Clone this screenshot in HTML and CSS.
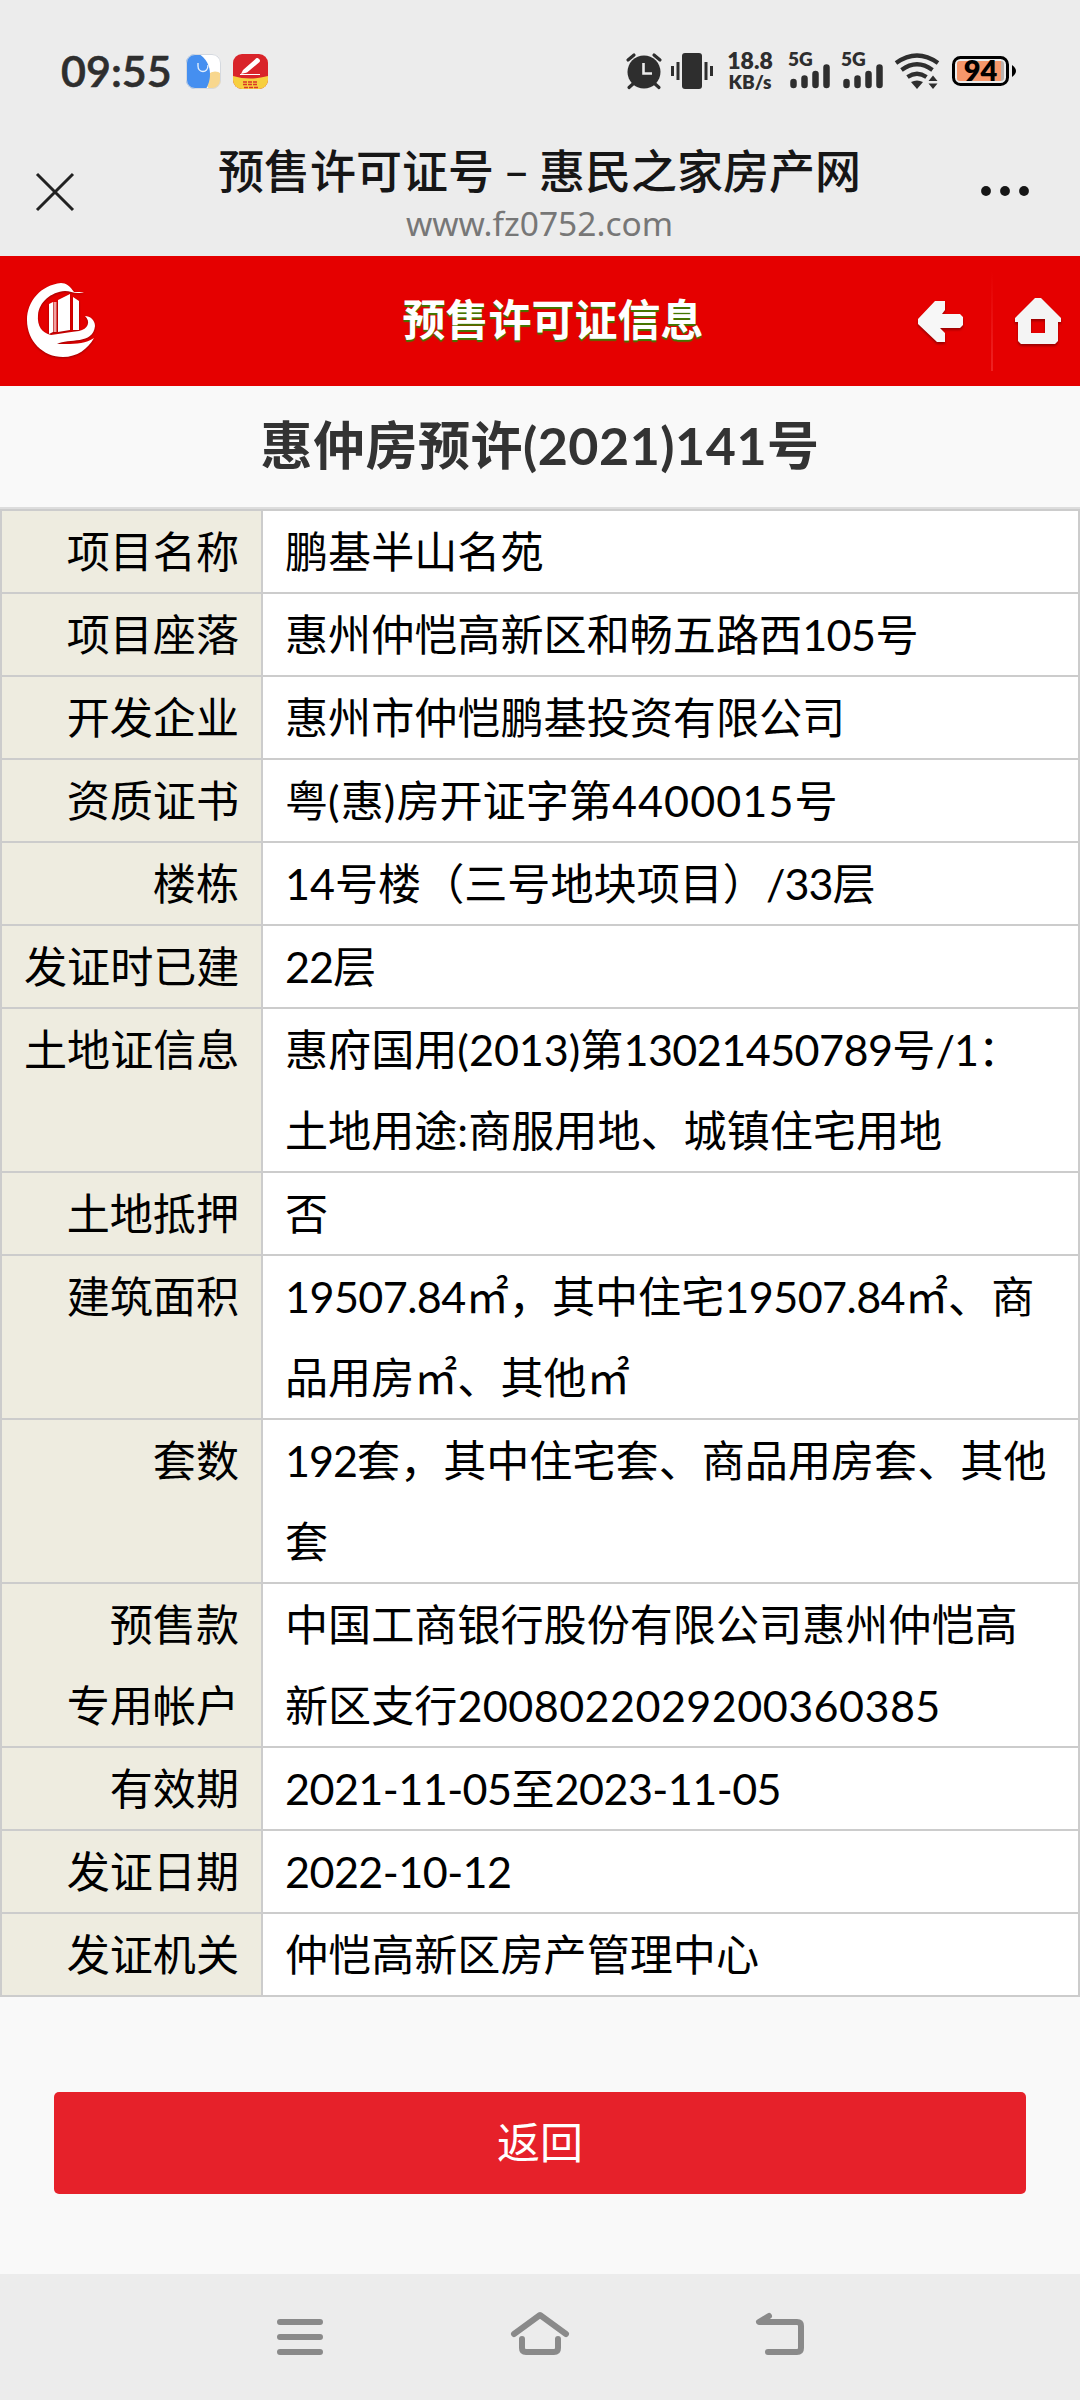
FILE: index.html
```html
<!DOCTYPE html>
<html lang="zh-CN">
<head>
    <meta charset="UTF-8">
    <meta name="viewport" content="width=device-width, initial-scale=1.0">
    <title>预售许可证号 – 惠民之家房产网</title>
    <link rel="stylesheet" href="styles.css">
</head>
<body>
    <!-- Status Bar -->
    <div class="status-bar">
        <span class="clock">09:55</span>
        <svg class="app-icon" width="35" height="35" viewBox="0 0 35 35">
            <clipPath id="round"><rect width="35" height="35" rx="9"/></clipPath>
            <g clip-path="url(#round)">
                <rect width="35" height="35" fill="#fff"/>
                <circle cx="29" cy="27" r="9.5" fill="#f8d78e"/>
                <path d="M0 0H13C20 4 24 12 24 20C24 27 22 31 20 35H0Z" fill="#458ff0"/>
                <path d="M12 9V12C12 19 22 20 22 11" fill="none" stroke="#e3effd" stroke-width="1.4"/>
            </g>
            <rect x=".5" y=".5" width="34" height="34" rx="8.5" fill="none" stroke="#d5d9df"/>
        </svg>
        <svg class="app-icon" width="35" height="35" viewBox="0 0 35 35">
            <g clip-path="url(#round)">
                <rect width="35" height="35" fill="#d9242a"/>
                <path d="M0 22Q17 27 35 22V35H0Z" fill="#f7cf3f"/>
                <path d="M8 20L10 16L22 5.500Q24 3 26 5Q28 6.500 26 8.500L14 18.500Z" fill="#fff"/>
                <path d="M7 20.500H27" stroke="#fff" stroke-width="1"/>
                <path d="M10 28H24M10 30.500H25M11 33.500H26" stroke="#d9372a" stroke-width="1.600" stroke-dasharray="4 1"/>
            </g>
        </svg>

        <div class="status-right">
            <svg class="alarm" width="36" height="36" viewBox="0 0 36 36">
                <circle cx="18" cy="19" r="16.500" fill="#2e2e2e"/>
                <path d="M2 7L8 2M34 7L28 2M3 34.500L8 30M33 34.500L28 30" stroke="#2e2e2e" stroke-width="3.200" stroke-linecap="round"/>
                <path d="M17.500 10V20.500H26" fill="none" stroke="#ececec" stroke-width="2.600"/>
            </svg>
            <svg class="vibrate" width="42" height="36" viewBox="0 0 42 36">
                <rect x="11" y="0" width="20" height="36" rx="3" fill="#2e2e2e"/>
                <path d="M1.500 13V23M7 9V27M35 9V27M40.500 13V23" stroke="#2e2e2e" stroke-width="3"/>
            </svg>
            <div class="speed">
                <span>18.8</span>
                <small>KB/s</small>
            </div>
            <svg class="signal" width="43" height="38" viewBox="0 0 43 38">
                <text x="0" y="14" class="net">5G</text>
                <path d="M5.500 30V33M16.500 26.500V33M27.500 22V33M38.500 15.500V33" stroke="#2e2e2e" stroke-width="6.500" stroke-linecap="round"/>
            </svg>
            <svg class="signal" width="43" height="38" viewBox="0 0 43 38">
                <text x="0" y="14" class="net">5G</text>
                <path d="M5.500 30V33M16.500 26.500V33M27.500 22V33M38.500 15.500V33" stroke="#2e2e2e" stroke-width="6.500" stroke-linecap="round"/>
            </svg>
            <svg class="wifi" width="45" height="37" viewBox="0 0 45 37">
                <g fill="none" stroke="#2e2e2e" stroke-width="4.200">
                    <path d="M1 10Q22 -5 43 10"/>
                    <path d="M6.500 17Q22 5.500 37.500 17"/>
                    <path d="M12.500 24Q22 17.500 31.500 24"/>
                </g>
                <path d="M16 29Q22 26 28 29L22 36Z" fill="#2e2e2e"/>
                <path d="M33.500 28L38 22.500L42.500 28ZM33.500 30.500H42.500L38 36Z" fill="#2e2e2e"/>
            </svg>
            <svg class="battery" width="64" height="30" viewBox="0 0 64 30">
                <rect x="1.500" y="1.500" width="54" height="27" rx="7" fill="#ececec" stroke="#000" stroke-width="3"/>
                <rect x="5" y="5" width="47" height="20" rx="3" fill="#b9b2ae"/>
                <path d="M8 5H49V25H8Q5 25 5 22V8Q5 5 8 5Z" fill="#f6976b"/>
                <path d="M60 9Q64 12 64 15Q64 18 60 21Z" fill="#000"/>
                <text x="28.500" y="25" class="level">94</text>
            </svg>
        </div>
    </div>

    <!-- Browser Title -->
    <div class="browser-bar">
        <svg class="close" width="38" height="38" viewBox="0 0 38 38">
            <path d="M1 1L37 37M37 1L1 37" stroke="#222" stroke-width="3"/>
        </svg>
        <div class="browser-title">
            <h1>预售许可证号 – 惠民之家房产网</h1>
            <p>www.fz0752.com</p>
        </div>
        <svg class="more" width="48" height="10" viewBox="0 0 48 10">
            <g fill="#161616">
                <circle cx="5" cy="5" r="4.900"/>
                <circle cx="24" cy="5" r="4.900"/>
                <circle cx="43" cy="5" r="4.900"/>
            </g>
        </svg>
    </div>

    <!-- Site Header -->
    <header class="site-header">
        <svg class="logo" width="70" height="76" viewBox="0 0 70 76">
            <path d="M57 10L47 10C43 4 39 1 34 1C14 3 0 19 0 38C0 59 16 75 36 75C50 75 61 67 67 56C57 63 44 62 30 62C42 56 66 63 68 44C68 38 63 34 58 34C64 40 61 47 52 49C41 50 34 52 24 53C15 51 10 44 11 33C12 20 24 10 38 9C44 9 49 13 57 10Z" fill="#fff"/>
            <path d="M22 22L26 20V50L22 52ZM31 18L43 12V48L31 50ZM46 15L52 19V48H46Z" fill="#fff"/>
            <path d="M28 20V50" stroke="#f3a0a0" stroke-width="3"/>
        </svg>
        <h2>预售许可证信息</h2>
        <div class="header-links">
            <svg class="back" width="47" height="43" viewBox="0 0 47 43">
                <path d="M18 1H28V10L25 14H43L46 17V25L43 28H23L28 33V42H20L1 24V19Z" fill="#f7f7f7"/>
            </svg>
            <span class="divider"></span>
            <svg class="home" width="46" height="48" viewBox="0 0 46 48">
                <path fill-rule="evenodd" d="M20 1H26L46 21V25H43V44L40 47H6L3 44V25H0V21ZM16 22V36H30V22Z" fill="#f4f4f4"/>
            </svg>
        </div>
    </header>

    <!-- Permit Info -->
    <main>
        <h3>惠仲房预许(2021)141号</h3>
        <table>
            <tr><th>项目名称</th><td>鹏基半山名苑</td></tr>
            <tr><th>项目座落</th><td>惠州仲恺高新区和畅五路西<span class="snug">105</span>号</td></tr>
            <tr><th>开发企业</th><td>惠州市仲恺鹏基投资有限公司</td></tr>
            <tr><th>资质证书</th><td>粤<span class="wide">(</span>惠<span class="wide">)</span>房开证字第<span class="wide">4400015</span>号</td></tr>
            <tr><th>楼栋</th><td>14号楼（三号地块项目）<span class="tight">/33</span>层</td></tr>
            <tr><th>发证时已建</th><td><span class="tight">22</span>层</td></tr>
            <tr><th>土地证信息</th><td>惠府国用(2013)第<span class="snug">13021450789</span>号<span class="tight">/1：</span><br>土地用途:商服用地、城镇住宅用地</td></tr>
            <tr><th>土地抵押</th><td>否</td></tr>
            <tr><th>建筑面积</th><td><span class="snug">19507.84</span>㎡，其中住宅<span class="snug">19507.84</span>㎡、商<br>品用房㎡、其他㎡</td></tr>
            <tr><th>套数</th><td><span class="tight">192</span>套，其中住宅套、商品用房套、其他<br>套</td></tr>
            <tr><th>预售款<br>专用帐户</th><td>中国工商银行股份有限公司惠州仲恺高<br>新区支行<span class="account">2008022029200360385</span></td></tr>
            <tr><th>有效期</th><td><span class="snug">2021-11-05</span>至<span class="snug">2023-11-05</span></td></tr>
            <tr><th>发证日期</th><td><span class="snug">2022-10-12</span></td></tr>
            <tr><th>发证机关</th><td>仲恺高新区房产管理中心</td></tr>
        </table>
        <button>返回</button>
    </main>

    <!-- System Navigation -->
    <nav>
        <svg width="60" height="50" viewBox="0 0 60 50">
            <path d="M10 10H50M10 25H50M10 40H50" class="nav-line"/>
        </svg>
        <svg width="60" height="50" viewBox="0 0 60 50">
            <path d="M4 22L30 3L56 22M12 27V36Q12 40 16 40H44Q48 40 48 36V27" class="nav-line"/>
        </svg>
        <svg width="60" height="50" viewBox="0 0 60 50">
            <path d="M19 4L9 10H47Q51 10 51 14V36Q51 40 47 40H18" class="nav-line"/>
        </svg>
    </nav>
</body>
</html>
```
FILE: styles.css
```css
/* General Reset */
* {
    margin: 0;
    padding: 0;
    box-sizing: border-box;
}

body {
    width: 1080px;
    height: 2400px;
    background: #f9f9f9;
    color: #000;
    font-family: Lato, 'Noto Sans CJK SC', sans-serif;
    display: flex;
    flex-direction: column;
    overflow: hidden;
}

svg {
    display: block;
    flex: none;
    overflow: visible;
}

/* Status Bar */
.status-bar {
    height: 142px;
    padding-left: 61px;
    background: #ececec;
    color: #2e2e2e;
    display: flex;
    align-items: center;
    flex: none;
}

.clock {
    width: 125px;
    padding-bottom: 2px;
    font-size: 43px;
    font-weight: 600;
    line-height: 1;
    white-space: nowrap;
    -webkit-text-stroke: 0.6px #2e2e2e;
}

.app-icon {
    margin-right: 12px;
}

.status-right {
    margin-left: auto;
    margin-right: 64px;
    display: flex;
    align-items: center;
}

.vibrate {
    margin-left: 9px;
}

.speed {
    width: 46px;
    margin-left: 14px;
    display: flex;
    flex-direction: column;
    align-items: center;
    font-weight: 800;
    line-height: 21px;
}

.speed span {
    font-size: 23px;
}

.speed small {
    font-size: 19px;
}

.signal {
    margin-left: 15px;
}

.signal + .signal {
    margin-left: 10px;
}

.net {
    font-size: 19px;
    font-weight: 800;
    fill: #2e2e2e;
}

.wifi {
    margin-left: 11px;
}

.battery {
    margin-left: 12px;
}

.level {
    font-size: 29px;
    font-weight: 800;
    text-anchor: middle;
}

/* Browser Title */
.browser-bar {
    height: 114px;
    padding: 0 51px 0 36px;
    background: #ececec;
    display: grid;
    grid-template-columns: 1fr auto 1fr;
    align-items: start;
    flex: none;
}

.close {
    margin-top: 31px;
}

.more {
    margin-top: 44px;
    justify-self: end;
}

.browser-title {
    margin-left: 14px;
    text-align: center;
}

.browser-title h1 {
    font-size: 46px;
    font-weight: 500;
    line-height: 58px;
    word-spacing: -2.5px;
    color: #161616;
    white-space: nowrap;
}

.browser-title p {
    font-family: 'Noto Sans', sans-serif;
    font-size: 33.5px;
    line-height: 46px;
    color: #777;
}

/* Site Header */
.site-header {
    height: 130px;
    padding: 0 19px 0 27px;
    background: #e50000;
    display: grid;
    grid-template-columns: 1fr auto 1fr;
    align-items: center;
    flex: none;
}

.logo {
    margin-bottom: 3px;
    filter: drop-shadow(0 1px 1px rgba(80, 0, 0, 0.5));
}

.site-header h2 {
    margin-left: 18px;
    padding-bottom: 2px;
    font-size: 43px;
    font-weight: 700;
    line-height: 60px;
    color: #fff;
    text-shadow: 0 2px 1px #3f7a00;
}

.header-links {
    display: flex;
    align-items: center;
    justify-content: flex-end;
}

.header-links svg {
    filter: drop-shadow(0 2px 1px rgba(80, 0, 0, 0.5));
}

.divider {
    width: 2px;
    height: 100px;
    margin: 0 22px 0 27px;
    background: linear-gradient(#e50000, #ee2222);
}

/* Permit Info */
main {
    flex: 1;
}

h3 {
    height: 123px;
    border-bottom: 2px solid #ddd;
    font-size: 52px;
    font-weight: 700;
    letter-spacing: 0.5px;
    line-height: 118px;
    text-align: center;
    color: #333;
}

table {
    width: 1080px;
    border-collapse: collapse;
    table-layout: fixed;
    background: #fff;
}

th,
td {
    border: 2px solid #ccc;
    padding: 0 22px;
    font-size: 43.1px;
    font-weight: 400;
    line-height: 81px;
    vertical-align: top;
    white-space: nowrap;
}

th {
    width: 261px;
    background: #eeece0;
    text-align: right;
}

td {
    text-align: left;
}

/* Number spacing */
.tight {
    letter-spacing: -1px;
}

.snug {
    letter-spacing: -0.55px;
}

.wide {
    letter-spacing: 1.1px;
}

.account {
    letter-spacing: 0.45px;
}

button {
    display: block;
    width: 972px;
    height: 102px;
    margin: 95px auto 0;
    padding-bottom: 6px;
    border: none;
    border-radius: 5px;
    background: #e6212a;
    color: #fff;
    font-family: inherit;
    font-size: 43px;
}

/* System Navigation */
nav {
    height: 126px;
    padding: 0 270px;
    background: #ececec;
    display: flex;
    align-items: center;
    justify-content: space-between;
    flex: none;
}

.nav-line {
    fill: none;
    stroke: #8a8a8a;
    stroke-width: 6;
    stroke-linecap: round;
    stroke-linejoin: round;
}
```
